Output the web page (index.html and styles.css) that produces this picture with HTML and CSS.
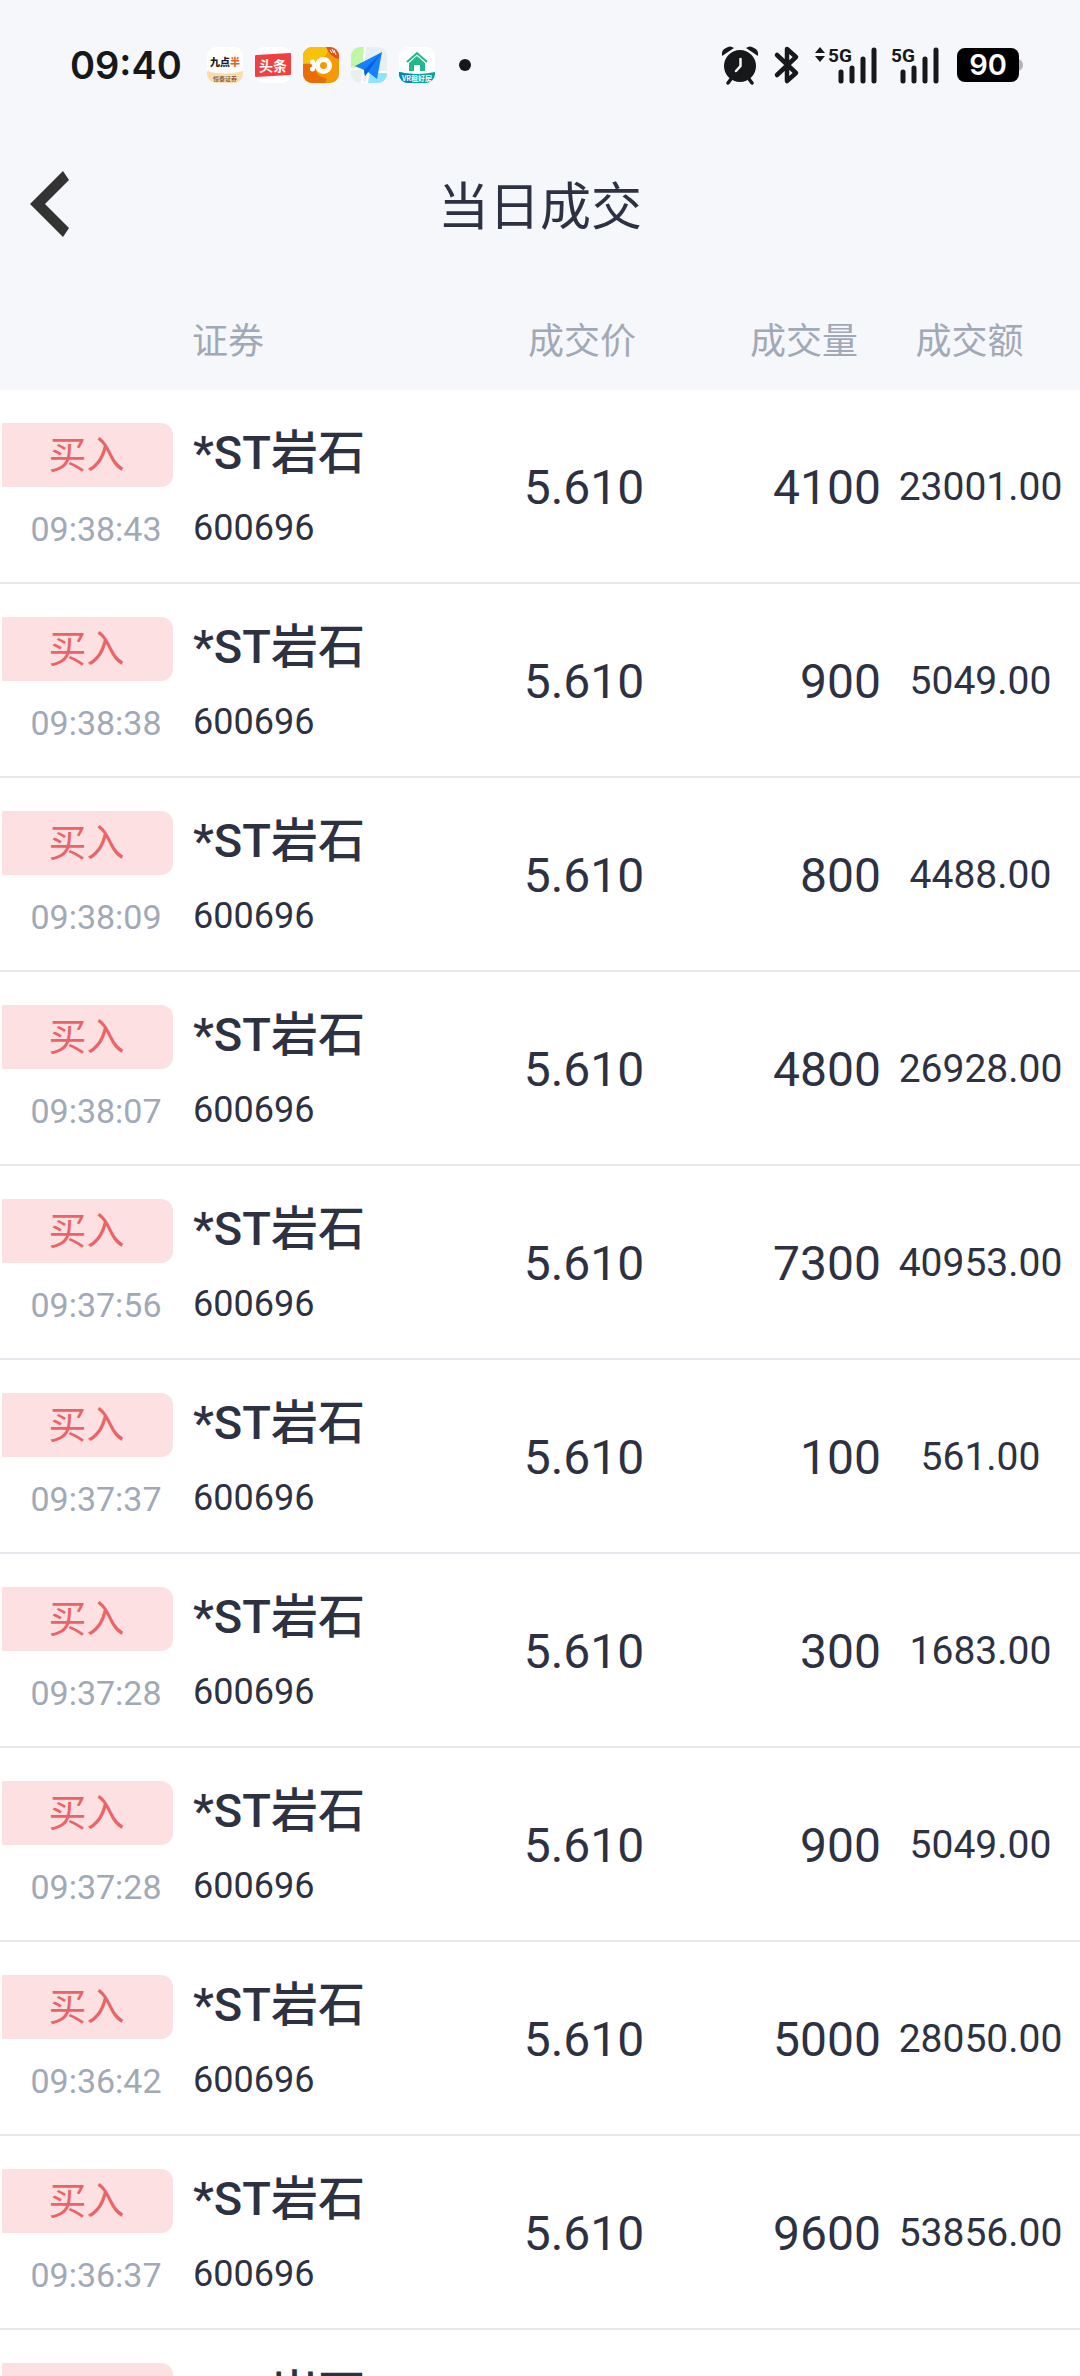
FILE: index.html
```html
<!DOCTYPE html>
<html lang="zh-CN">
<head>
<meta charset="utf-8">
<meta name="viewport" content="width=device-width, initial-scale=1">
<title>当日成交</title>
<link rel="stylesheet" href="styles.css">
</head>
<body>
<div class="statusbar">
  <time class="clock">09:40</time>
  <div class="apps">
    <svg class="app" viewBox="0 0 36 36">
      <defs><clipPath id="tile"><rect width="36" height="36" rx="9"/></clipPath></defs>
      <g clip-path="url(#tile)">
        <rect width="36" height="36" fill="#fff"/>
        <path d="M0 24q18 5 36 0v12H0z" fill="#fbdcae"/>
        <text x="3" y="19" class="t-nine">九点<tspan fill="#e2622c">半</tspan></text>
        <text x="18" y="34" text-anchor="middle" class="t-sub">恒泰证券</text>
      </g>
    </svg>
    <svg class="app" viewBox="0 0 36 36">
      <rect width="36" height="36" rx="9" fill="#fff"/>
      <path d="M1 8l34-2q1 0 1 1v20q0 1-1 1L1 30q-1 0-1-1V9q0-1 1-1z" fill="#f04142"/>
      <text x="18" y="24" text-anchor="middle" class="t-tou">头条</text>
    </svg>
    <svg class="app" viewBox="0 0 36 36">
      <g clip-path="url(#tile)">
        <rect width="36" height="36" fill="#f39a05"/>
        <path d="M0 0h27Q22 16 0 17z" fill="#f9c20a"/>
        <path d="M0 17q8-1 12 3 0 9 12 12l-2 4H0z" fill="#ea6d03"/>
        <path d="M23 0h13v12Q27 10 23 0z" fill="#e4501f"/>
        <path d="M27 3l2 3M29 2l2 4M31 3l2 5" stroke="#fff" stroke-width="1"/>
        <circle cx="20.500" cy="18.500" r="6" fill="none" stroke="#fff" stroke-width="5"/>
        <circle cx="9.500" cy="15" r="2.500" fill="#fff"/><circle cx="9.500" cy="22" r="2.500" fill="#fff"/>
        <path d="M9 15l5 3.500L9 22" stroke="#fff" stroke-width="3" fill="#fff"/>
      </g>
    </svg>
    <svg class="app" viewBox="0 0 36 36">
      <g clip-path="url(#tile)">
        <rect width="36" height="36" fill="#e8f0ef"/>
        <path d="M0 0h14L12 20H0z" fill="#c0f7a4"/>
        <path d="M19 26h17v10H17z" fill="#8fe3fa"/>
        <path d="M14 0L11 36h5l1-11h19M0 22h14" stroke="#fff" stroke-width="2" fill="none"/>
        <path d="M31 5L4 19l9 4 1 6 3-4 9 7z" fill="#1781fb"/>
        <path d="M31 5L13 23l1 6 3-4z" fill="#0862e0"/>
      </g>
    </svg>
    <svg class="app" viewBox="0 0 36 36">
      <g clip-path="url(#tile)">
        <rect width="36" height="36" fill="#fff"/>
        <path d="M8 15L18 6l10 9" fill="none" stroke="#20b98c" stroke-width="2"/>
        <path d="M18 9l8 7v8h-5v-6h-6v6h-5v-8z" fill="#20b98c"/>
        <path d="M0 25q18 4 36 0v11H0z" fill="#0ba0a0"/>
        <path d="M0 25q7 2 14 2v9H0z" fill="#0a83b4"/>
        <text x="18" y="34" text-anchor="middle" class="t-vr">VR租好房</text>
      </g>
    </svg>
    <span class="more"></span>
  </div>
  <div class="system">
    <svg width="38" height="38" viewBox="0 0 38 38">
      <path d="M1 10Q0 4 5 2q4-3 8 0zM37 10q1-6-4-8-4-3-8 0z" fill="#17181a"/>
      <circle cx="19" cy="20" r="16" fill="#17181a"/>
      <path d="M10 33l-3 4M28 33l3 4" stroke="#17181a" stroke-width="3.500" stroke-linecap="round"/>
      <path d="M19.500 13v7l-4.500 5" fill="none" stroke="#f5f7fb" stroke-width="2.500" stroke-linecap="round"/>
    </svg>
    <svg class="bt" width="24" height="38" viewBox="0 0 24 38">
      <path d="M2 9l19 18-9 8V3l9 8L2 29" fill="none" stroke="#17181a" stroke-width="4.500" stroke-linejoin="round" stroke-linecap="round"/>
    </svg>
    <svg class="sig" width="64" height="38" viewBox="0 0 64 38">
      <path d="M0 7l5-6 5 6zM0 10h10l-5 6z" fill="#17181a"/>
      <text x="13" y="16" class="t-5g">5G</text>
      <path d="M26 26v9M37 22v13M48 13v22M59 4v31" stroke="#17181a" stroke-width="5" stroke-linecap="round"/>
    </svg>
    <svg class="sig2" width="50" height="38" viewBox="0 0 50 38">
      <text x="0" y="16" class="t-5g">5G</text>
      <path d="M12 26v9M23 22v13M34 13v22M45 4v31" stroke="#17181a" stroke-width="5" stroke-linecap="round"/>
    </svg>
    <svg width="66" height="38" viewBox="0 0 66 38">
      <path d="M56 5q5 0 6 8 4 2 4 6t-4 6q-1 8-6 8z" fill="#b3b4b8"/>
      <rect y="2" width="62" height="34" rx="8" fill="#000"/>
      <text x="31" y="29" text-anchor="middle" class="t-batt">90</text>
    </svg>
  </div>
</div>
<header class="titlebar">
  <button class="back" type="button" aria-label="返回">
    <svg width="40" height="66" viewBox="0 0 40 66"><path d="M33 0L0 33l33 33 6-9-24-24L39 9z" fill="#333"/></svg>
  </button>
  <h1>当日成交</h1>
</header>
<main class="list">
  <table>
    <colgroup><col class="c-side"><col><col class="c-price"><col class="c-vol"><col class="c-amt"></colgroup>
    <thead><tr><th></th><th class="name">证券</th><th class="price">成交价</th><th class="vol">成交量</th><th class="amt">成交额</th></tr></thead>
    <tbody>
      <tr><td class="side"><span class="badge">买入</span><time>09:38:43</time></td><td class="name"><b>*ST岩石</b><span>600696</span></td><td class="price">5.610</td><td class="vol">4100</td><td class="amt">23001.00</td></tr>
      <tr><td class="side"><span class="badge">买入</span><time>09:38:38</time></td><td class="name"><b>*ST岩石</b><span>600696</span></td><td class="price">5.610</td><td class="vol">900</td><td class="amt">5049.00</td></tr>
      <tr><td class="side"><span class="badge">买入</span><time>09:38:09</time></td><td class="name"><b>*ST岩石</b><span>600696</span></td><td class="price">5.610</td><td class="vol">800</td><td class="amt">4488.00</td></tr>
      <tr><td class="side"><span class="badge">买入</span><time>09:38:07</time></td><td class="name"><b>*ST岩石</b><span>600696</span></td><td class="price">5.610</td><td class="vol">4800</td><td class="amt">26928.00</td></tr>
      <tr><td class="side"><span class="badge">买入</span><time>09:37:56</time></td><td class="name"><b>*ST岩石</b><span>600696</span></td><td class="price">5.610</td><td class="vol">7300</td><td class="amt">40953.00</td></tr>
      <tr><td class="side"><span class="badge">买入</span><time>09:37:37</time></td><td class="name"><b>*ST岩石</b><span>600696</span></td><td class="price">5.610</td><td class="vol">100</td><td class="amt">561.00</td></tr>
      <tr><td class="side"><span class="badge">买入</span><time>09:37:28</time></td><td class="name"><b>*ST岩石</b><span>600696</span></td><td class="price">5.610</td><td class="vol">300</td><td class="amt">1683.00</td></tr>
      <tr><td class="side"><span class="badge">买入</span><time>09:37:28</time></td><td class="name"><b>*ST岩石</b><span>600696</span></td><td class="price">5.610</td><td class="vol">900</td><td class="amt">5049.00</td></tr>
      <tr><td class="side"><span class="badge">买入</span><time>09:36:42</time></td><td class="name"><b>*ST岩石</b><span>600696</span></td><td class="price">5.610</td><td class="vol">5000</td><td class="amt">28050.00</td></tr>
      <tr><td class="side"><span class="badge">买入</span><time>09:36:37</time></td><td class="name"><b>*ST岩石</b><span>600696</span></td><td class="price">5.610</td><td class="vol">9600</td><td class="amt">53856.00</td></tr>
      <tr><td class="side"><span class="badge">买入</span></td><td class="name"><b>*ST岩石</b></td><td class="price"></td><td class="vol"></td><td class="amt"></td></tr>
    </tbody>
  </table>
</main>
</body>
</html>
```

FILE: styles.css
```css
* { box-sizing: border-box; }

body {
  margin: 0;
  height: 100vh;
  display: flex;
  flex-direction: column;
  overflow: hidden;
  background: #f5f7fb;
  color: #2d3142;
  font-family: Roboto, "Noto Sans CJK SC", sans-serif;
}

/* phone status bar */
.statusbar {
  flex: none;
  height: 130px;
  padding: 0 57px 0 70px;
  display: flex;
  align-items: center;
}
.clock {
  width: 137px;
  font: 600 38px/48px Inter, sans-serif;
  color: #17181a;
}
.apps { display: flex; align-items: center; gap: 12px; }
.app { width: 36px; height: 36px; display: block; }
.more {
  width: 12px;
  height: 12px;
  margin-left: 12px;
  border-radius: 50%;
  background: #17181a;
}
.system { margin-left: auto; display: flex; align-items: center; }
.system svg { overflow: visible; }
.bt { margin-left: 16px; }
.sig { margin-left: 16px; }
.sig2 { margin-left: 12px; }
.sig2 + svg { margin-left: 16px; }

.t-nine { font: 900 10px "Noto Sans CJK SC", sans-serif; fill: #1c1c1c; }
.t-sub { font: 500 6px "Noto Sans CJK SC", sans-serif; fill: #7a4a32; }
.t-tou { font: 700 14px "Noto Sans CJK SC", sans-serif; fill: #fff; }
.t-vr { font: 700 7px "Noto Sans CJK SC", sans-serif; fill: #fff; }
.t-5g { font: 700 19px Roboto, sans-serif; fill: #17181a; }
.t-batt { font: 600 29px Inter, sans-serif; fill: #fff; }

/* page title */
.titlebar {
  flex: none;
  height: 156px;
  display: grid;
  grid-template-columns: 100px 1fr 100px;
  align-items: center;
}
.titlebar h1 {
  margin: 0;
  text-align: center;
  font-size: 51px;
  font-weight: 400;
  line-height: 64px;
}
.back {
  width: 100px;
  height: 100px;
  padding: 0 0 8px 30px;
  border: 0;
  background: none;
  display: flex;
  align-items: center;
}

/* trades */
.list { flex: 1; min-height: 0; overflow: hidden; }
table { width: 100%; table-layout: fixed; border-collapse: separate; border-spacing: 0; }
.c-side { width: 192px; }
.c-price { width: 200px; }
.c-vol { width: 197px; }
.c-amt { width: 199px; }

th {
  height: 104px;
  padding: 0;
  font-size: 36px;
  font-weight: 400;
  color: #a2a9b6;
  text-align: left;
}
th.price { padding-right: 4px; text-align: center; }
th.vol { padding-right: 23px; text-align: right; }
th.amt { padding-right: 22px; text-align: center; }

td {
  height: 194px;
  padding: 0;
  background: #fff;
  border-bottom: 2px solid #e5e8ed;
  vertical-align: middle;
}
td.side, td.name { padding-top: 33px; vertical-align: top; }
td.price { padding-top: 2px; font-size: 48px; text-align: center; }
td.vol { padding-top: 2px; font-size: 48px; text-align: right; }
td.amt { padding-top: 2px; font-size: 39px; text-align: center; }

.badge {
  display: block;
  width: 171px;
  height: 64px;
  margin-left: 2px;
  padding-right: 2px;
  border-radius: 0 12px 12px 0;
  background: #fde0e1;
  color: #e96467;
  font-size: 38px;
  line-height: 64px;
  text-align: center;
}
.side time {
  display: block;
  margin-top: 20px;
  font-size: 34px;
  line-height: 44px;
  color: #a2a9b6;
  text-align: center;
}
.name b {
  display: block;
  font-size: 47px;
  font-weight: 500;
  line-height: 60px;
}
td.name { padding-left: 1px; }
.name span {
  display: block;
  margin-top: 23px;
  font-size: 36px;
  line-height: 44px;
}
```
